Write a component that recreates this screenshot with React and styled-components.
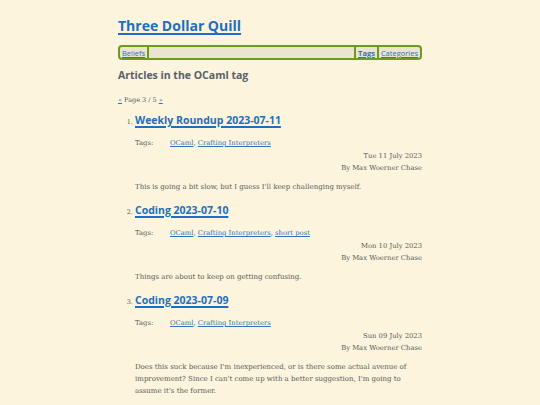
import React from 'react'
import styled, { createGlobalStyle } from 'styled-components'

const GlobalStyle = createGlobalStyle`
  body {
    margin: 0;
    background: #fcf4dc;
  }
`

const Page = styled.div`
  width: 304px;
  margin: 0 auto;
  padding-top: 14px;
  font-family: 'DejaVu Serif', serif;
  color: #5a5a5a;
`

const SiteTitle = styled.h1`
  margin: 0;
  font-family: 'Open Sans', sans-serif;
  font-weight: 700;
  font-size: 14px;
  line-height: 24px;
  a {
    color: #1c6fc2;
    text-decoration-thickness: 2px;
    text-underline-offset: 2px;
  }
`

const Nav = styled.nav`
  margin-top: 7px;
  height: 15px;
  box-sizing: border-box;
  display: flex;
  align-items: stretch;
  background: #ebe4d1;
  border: 2px solid #6c9b22;
  border-radius: 4px;
  font-family: 'Open Sans', sans-serif;
  font-size: 7.5px;
`

const NavLink = styled.a`
  display: flex;
  align-items: center;
  padding: 0 2px;
  color: #2f72b5;
  font-weight: ${p => (p.$bold ? 700 : 400)};
  border-left: ${p => (p.$sepLeft ? '2px solid #6c9b22' : 'none')};
  border-right: ${p => (p.$sepRight ? '2px solid #6c9b22' : 'none')};
`

const Spacer = styled.div`
  flex: 1;
`

const Heading = styled.h2`
  margin: 6px 0 0;
  font-family: 'Open Sans', sans-serif;
  font-weight: 700;
  font-size: 10.5px;
  line-height: 18px;
  color: #56616b;
`

const Pager = styled.div`
  margin-top: 11px;
  font-size: 6.5px;
  line-height: 10px;
  a {
    color: #2f72b5;
  }
`

const List = styled.ol`
  margin: 7px 0 0;
  padding-left: 17px;
`

const Item = styled.li`
  font-size: 6.5px;
  margin-bottom: 9px;
  &::marker {
    color: #5a5a5a;
  }
`

const ItemTitle = styled.h3`
  margin: 0;
  font-family: 'Open Sans', sans-serif;
  font-weight: 700;
  font-size: 10.5px;
  line-height: 16px;
  a {
    color: #1c6fc2;
    text-decoration-thickness: 1.5px;
    text-underline-offset: 1.5px;
  }
`

const TagRow = styled.div`
  display: flex;
  margin-top: 10px;
  line-height: 10px;
  font-size: 6.8px;
  a {
    color: #2f72b5;
  }
`

const TagLabel = styled.span`
  width: 35px;
`

const Meta = styled.div`
  margin-top: 2px;
  text-align: right;
  font-size: 6.8px;
  line-height: 12px;
`

const Summary = styled.p`
  margin: 7px 0 0;
  font-size: 7px;
  line-height: 12px;
`

const articles = [
  {
    title: 'Weekly Roundup 2023-07-11',
    tags: ['OCaml', 'Crafting Interpreters'],
    date: 'Tue 11 July 2023',
    summary: "This is going a bit slow, but I guess I'll keep challenging myself.",
  },
  {
    title: 'Coding 2023-07-10',
    tags: ['OCaml', 'Crafting Interpreters', 'short post'],
    date: 'Mon 10 July 2023',
    summary: 'Things are about to keep on getting confusing.',
  },
  {
    title: 'Coding 2023-07-09',
    tags: ['OCaml', 'Crafting Interpreters'],
    date: 'Sun 09 July 2023',
    summary:
      "Does this suck because I'm inexperienced, or is there some actual avenue of improvement? Since I can't come up with a better suggestion, I'm going to assume it's the former.",
  },
]

export default function App() {
  return (
    <>
      <GlobalStyle />
      <Page>
        <SiteTitle>
          <a href="#">Three Dollar Quill</a>
        </SiteTitle>
        <Nav>
          <NavLink href="#" $sepRight>Beliefs</NavLink>
          <Spacer />
          <NavLink href="#" $bold $sepLeft>Tags</NavLink>
          <NavLink href="#" $sepLeft>Categories</NavLink>
        </Nav>
        <Heading>Articles in the OCaml tag</Heading>
        <Pager>
          <a href="#">«</a> Page 3 / 5 <a href="#">»</a>
        </Pager>
        <List start={1}>
          {articles.map(a => (
            <Item key={a.title}>
              <ItemTitle>
                <a href="#">{a.title}</a>
              </ItemTitle>
              <TagRow>
                <TagLabel>Tags:</TagLabel>
                <span>
                  {a.tags.map((t, i) => (
                    <React.Fragment key={t}>
                      {i > 0 && ', '}
                      <a href="#">{t}</a>
                    </React.Fragment>
                  ))}
                </span>
              </TagRow>
              <Meta>
                <div>{a.date}</div>
                <div>By Max Woerner Chase</div>
              </Meta>
              <Summary>{a.summary}</Summary>
            </Item>
          ))}
        </List>
      </Page>
    </>
  )
}
